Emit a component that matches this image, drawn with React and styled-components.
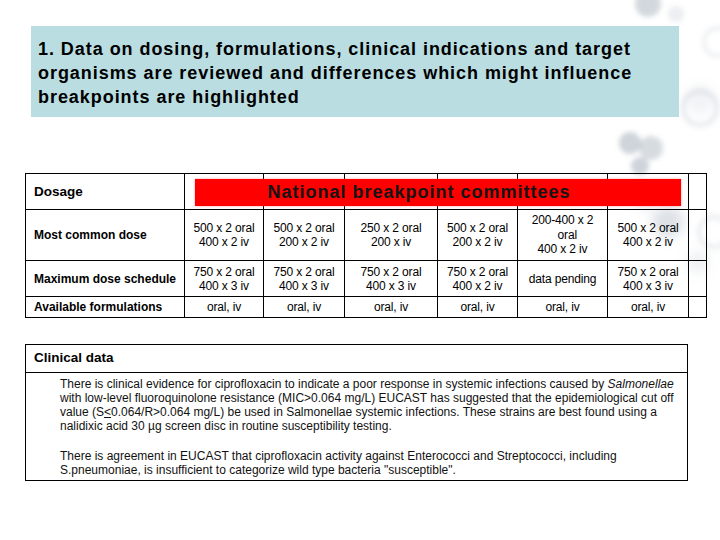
import React from "react";
import styled, { createGlobalStyle } from "styled-components";

const Global = createGlobalStyle`
  html, body { margin: 0; padding: 0; background: #ffffff; }
  body { font-family: "Liberation Sans", Arial, sans-serif; color: #000; }
`;

const Page = styled.div`
  position: relative;
  width: 720px;
  height: 540px;
  overflow: hidden;
  background: #ffffff;
  display: flex;
  flex-direction: column;
`;

const Backdrop = styled.svg`
  position: absolute;
  left: 0;
  top: 0;
  width: 720px;
  height: 540px;
  pointer-events: none;
`;

const Content = styled.div`
  position: relative;
  display: flex;
  flex-direction: column;
  padding: 26px 0 0 25px;
`;

const TitleBox = styled.div`
  margin-left: 6px;
  width: 648px;
  height: 91px;
  box-sizing: border-box;
  background: #b9dde1;
  padding: 11px 0 0 7px;
  font-size: 18px;
  letter-spacing: 0.95px;
  font-weight: bold;
  line-height: 24px;
  white-space: nowrap;
`;

const TableWrap = styled.div`
  position: relative;
  margin-top: 56px;
  width: 681px;
`;

const Table = styled.table`
  border-collapse: collapse;
  table-layout: fixed;
  width: 681px;
  background: transparent;
`;

const Row = styled.tr`
  height: ${(p) => p.$h}px;
`;

const Cell = styled.td`
  border: 1px solid #000;
  padding: 0;
  text-align: center;
  vertical-align: middle;
  font-size: 12px;
  letter-spacing: -0.15px;
  line-height: ${(p) => p.$lh || 14}px;
  white-space: nowrap;
`;

const LabelCell = styled.td`
  border: 1px solid #000;
  padding: 0 0 0 8px;
  text-align: left;
  vertical-align: middle;
  font-size: ${(p) => (p.$big ? 13.5 : 12)}px;
  font-weight: bold;
  white-space: nowrap;
`;

const Banner = styled.div`
  position: absolute;
  left: 170px;
  top: 6px;
  width: 486px;
  height: 27px;
  background: #ff0000;
  box-shadow: 0 0 2px rgba(255, 80, 80, 0.6);
  display: flex;
  align-items: center;
  justify-content: center;
  padding-right: 38px;
  box-sizing: border-box;
  font-size: 18px;
  letter-spacing: 1px;
  font-weight: bold;
  color: #141414;
  white-space: nowrap;
`;

const Clinical = styled.div`
  margin-top: 26px;
  width: 663px;
  height: 137px;
  box-sizing: border-box;
  border: 1px solid #000;
  display: flex;
  flex-direction: column;
  background: #fff;
`;

const ClinicalHead = styled.div`
  height: 28px;
  box-sizing: border-box;
  border-bottom: 1px solid #000;
  display: flex;
  align-items: center;
  padding: 0 0 3px 8px;
  font-size: 13.5px;
  font-weight: bold;
`;

const ClinicalBody = styled.div`
  padding: 4px 0 0 34px;
  display: flex;
  flex-direction: column;
  gap: 16px;
`;

const Para = styled.p`
  margin: 0;
  font-size: 12px;
  letter-spacing: 0;
  line-height: 14px;
  white-space: nowrap;
  color: #111;
`;

const cols = [159, 79, 81, 93, 80, 90, 81, 18];

const rows = [
  {
    label: "Most common dose",
    h: 51,
    cells: [
      ["500 x 2 oral", "400 x 2 iv"],
      ["500 x 2 oral", "200 x 2 iv"],
      ["250 x 2 oral", "200 x  iv"],
      ["500 x 2 oral", "200 x 2 iv"],
      ["200-400 x 2", "\u00a0\u00a0\u00a0oral", "400 x 2 iv"],
      ["500 x 2 oral", "400 x 2 iv"],
      [""],
    ],
  },
  {
    label: "Maximum dose schedule",
    h: 36,
    cells: [
      ["750 x 2 oral", "400 x 3 iv"],
      ["750 x 2 oral", "400 x 3 iv"],
      ["750 x 2 oral", "400 x 3 iv"],
      ["750 x 2 oral", "400 x 2 iv"],
      ["data pending"],
      ["750 x 2 oral", "400 x 3 iv"],
      [""],
    ],
  },
  {
    label: "Available formulations",
    h: 21,
    cells: [
      ["oral, iv"],
      ["oral, iv"],
      ["oral, iv"],
      ["oral, iv"],
      ["oral, iv"],
      ["oral, iv"],
      [""],
    ],
  },
];

function Blobs() {
  return (
    <Backdrop viewBox="0 0 720 540">
      <defs>
        <filter id="bl" x="-50%" y="-50%" width="200%" height="200%">
          <feGaussianBlur stdDeviation="2.5" />
        </filter>
        <filter id="bl2" x="-50%" y="-50%" width="200%" height="200%">
          <feGaussianBlur stdDeviation="6" />
        </filter>
      </defs>
      <g filter="url(#bl)" fill="#7f8f9f">
        <circle cx="648" cy="4" r="13" opacity="0.35" />
        <circle cx="676" cy="14" r="8" opacity="0.15" />
        <circle cx="630" cy="143" r="11" opacity="0.38" />
        <circle cx="651" cy="148" r="12" opacity="0.32" />
        <circle cx="640" cy="166" r="9" opacity="0.38" />
      </g>
      <g filter="url(#bl)" fill="none" stroke="#8494a4">
        <circle cx="700" cy="108" r="17" strokeWidth="5" opacity="0.18" />
        <circle cx="718" cy="42" r="14" strokeWidth="4" opacity="0.15" />
        <circle cx="714" cy="232" r="15" strokeWidth="5" opacity="0.15" />
      </g>
      <g filter="url(#bl2)" fill="#8d9cab">
        <circle cx="668" cy="222" r="16" opacity="0.3" />
        <circle cx="645" cy="200" r="9" opacity="0.2" />
        <circle cx="698" cy="262" r="11" opacity="0.15" />
        <circle cx="700" cy="100" r="14" opacity="0.12" />
      </g>
    </Backdrop>
  );
}

export default function App() {
  return (
    <Page>
      <Global />
      <Blobs />
      <Content>
        <TitleBox>
          1. Data on dosing, formulations, clinical indications and target
          <br />
          organisms are reviewed and differences which might influence
          <br />
          breakpoints are highlighted
        </TitleBox>

        <TableWrap>
          <Table>
            <colgroup>
              {cols.map((w, i) => (
                <col key={i} style={{ width: w }} />
              ))}
            </colgroup>
            <tbody>
              <Row $h={36}>
                <LabelCell $big>Dosage</LabelCell>
                {cols.slice(1).map((_, i) => (
                  <Cell key={i} />
                ))}
              </Row>
              {rows.map((r) => (
                <Row key={r.label} $h={r.h}>
                  <LabelCell>{r.label}</LabelCell>
                  {r.cells.map((lines, i) => (
                    <Cell key={i} $lh={lines.length > 2 ? 14.5 : 14}>
                      {lines.map((l, j) => (
                        <React.Fragment key={j}>
                          {j > 0 && <br />}
                          {l}
                        </React.Fragment>
                      ))}
                    </Cell>
                  ))}
                </Row>
              ))}
            </tbody>
          </Table>
          <Banner>National breakpoint committees</Banner>
        </TableWrap>

        <Clinical>
          <ClinicalHead>Clinical data</ClinicalHead>
          <ClinicalBody>
            <Para>
              There is clinical evidence for ciprofloxacin to indicate a poor response in systemic infections caused by <i>Salmonellae</i>
              <br />
              with low-level fluoroquinolone resistance (MIC&gt;0.064 mg/L) EUCAST has suggested that the epidemiological cut off
              <br />
              value (S<u>&lt;</u>0.064/R&gt;0.064 mg/L) be used in Salmonellae systemic infections. These strains are best found using a
              <br />
              nalidixic acid 30 µg screen disc in routine susceptibility testing.
            </Para>
            <Para>
              There is agreement in EUCAST that ciprofloxacin activity against Enterococci and Streptococci, including
              <br />
              S.pneumoniae, is insufficient to categorize wild type bacteria "susceptible".
            </Para>
          </ClinicalBody>
        </Clinical>
      </Content>
    </Page>
  );
}
